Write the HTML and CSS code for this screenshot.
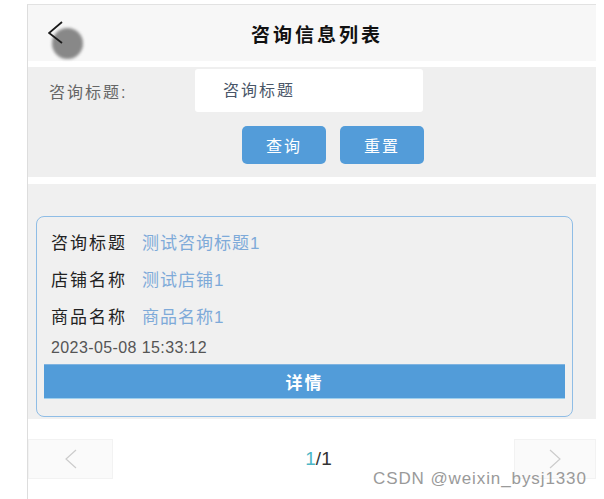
FILE: index.html
```html
<!DOCTYPE html>
<html lang="zh-CN">
<head>
  <meta charset="UTF-8">
  <title>咨询信息列表</title>
  <meta name="viewport" content="width=device-width, initial-scale=1">
  <link rel="stylesheet" href="styles.css">
</head>
<body>
  <div class="page">
    <div class="header">
      <span class="back">
        <span class="touch"></span>
        <svg width="16" height="24" viewBox="0 0 16 24"><polyline points="14,1 1,12 14,22" fill="none" stroke="#1a1a1a" stroke-width="1.8"/></svg>
      </span>
      <h1>咨询信息列表</h1>
    </div>

    <div class="search">
      <div class="search-row">
        <label>咨询标题:</label>
        <input type="text" placeholder="咨询标题">
      </div>
      <div class="search-btns">
        <button class="btn">查询</button>
        <button class="btn">重置</button>
      </div>
    </div>

    <div class="list">
      <div class="card">
        <div class="row"><span class="key">咨询标题</span><span class="val">测试咨询标题1</span></div>
        <div class="row"><span class="key">店铺名称</span><span class="val">测试店铺1</span></div>
        <div class="row"><span class="key">商品名称</span><span class="val">商品名称1</span></div>
        <div class="date">2023-05-08 15:33:12</div>
        <button class="detail">详情</button>
      </div>
    </div>

    <div class="pager">
      <span class="pg-btn"><svg width="12" height="20" viewBox="0 0 12 20"><polyline points="11,1 1,10 11,19" fill="none" stroke="#ccc" stroke-width="1.2"/></svg></span>
      <span class="pg-num"><em>1</em>/1</span>
      <span class="pg-btn next"><svg width="12" height="20" viewBox="0 0 12 20"><polyline points="1,1 11,10 1,19" fill="none" stroke="#ccc" stroke-width="1.2"/></svg></span>
    </div>
  </div>
  <div class="mark">CSDN @weixin_bysj1330</div>
</body>
</html>
```

FILE: styles.css
```css
body {
  margin: 0;
  background: #fff;
  font-family: "Liberation Sans", "Noto Sans CJK SC", sans-serif;
  color: #222;
}
.page {
  margin: 4px 0 0 27px;
  width: 569px;
  min-height: 495px;
  border-left: 1px solid #ddd;
  border-top: 1px solid #e2e2e2;
  box-sizing: border-box;
}
.header {
  position: relative;
  height: 56px;
  background: #f7f7f7;
  display: flex;
  align-items: center;
  justify-content: center;
}
.header h1 {
  margin: 0 0 0 10px;
  font-size: 19px;
  letter-spacing: 3px;
  font-weight: bold;
  color: #111;
}
.back {
  position: absolute;
  left: 20px;
  top: 16px;
}
.back svg {
  position: relative;
  display: block;
}
.touch {
  position: absolute;
  left: 4px;
  top: 7px;
  width: 31px;
  height: 31px;
  border-radius: 50%;
  background: #888;
  filter: blur(1.5px);
}
.search {
  margin-top: 6px;
  background: #efefef;
  height: 110px;
  padding-top: 2px;
  box-sizing: border-box;
}
.search-row {
  display: flex;
  align-items: center;
  padding-left: 21px;
}
.search-row label {
  width: 146px;
  font-size: 16px;
  letter-spacing: 2px;
  color: #666;
}
.search-row input {
  width: 228px;
  height: 43px;
  border: none;
  border-radius: 3px;
  background: #fff;
  padding: 0 0 0 28px;
  box-sizing: border-box;
  font-family: inherit;
  font-size: 16px;
  letter-spacing: 2px;
}
.search-row input::placeholder {
  color: #4a5668;
}
.search-btns {
  display: flex;
  gap: 14px;
  padding-left: 214px;
  margin-top: 14px;
}
.btn {
  width: 84px;
  height: 38px;
  border: none;
  border-radius: 5px;
  background: #539cd9;
  color: #fff;
  font-family: inherit;
  font-size: 16px;
  letter-spacing: 2px;
}
.list {
  margin-top: 7px;
  background: #f0f0f0;
  padding: 32px 23px 2px 8px;
}
.card {
  border: 1px solid #8fbde6;
  border-radius: 8px;
  padding: 8px 7px 17px 7px;
}
.row {
  display: flex;
  gap: 15px;
  height: 37px;
  line-height: 37px;
  padding-left: 7px;
  font-size: 17px;
}
.key {
  color: #222;
  letter-spacing: 2px;
}
.val {
  color: #7eaad9;
  letter-spacing: 1px;
}
.date {
  height: 24px;
  line-height: 24px;
  padding-left: 7px;
  font-size: 16px;
  letter-spacing: 0.4px;
  color: #555;
}
.detail {
  display: block;
  width: 100%;
  height: 35px;
  margin-top: 4px;
  border: none;
  border-top: 1px solid #7fb3e0;
  border-bottom: 1px solid #9fd0ee;
  background: #529cd9;
  color: #fff;
  font-family: inherit;
  font-size: 17px;
  font-weight: bold;
  letter-spacing: 2px;
}
.pager {
  display: flex;
  justify-content: space-between;
  align-items: center;
  margin-top: 20px;
}
.pg-btn {
  width: 85px;
  height: 40px;
  background: #fafafa;
  border: 1px solid #f2f2f2;
  box-sizing: border-box;
  display: flex;
  align-items: center;
  justify-content: center;
}
.pg-btn.next {
  width: 82px;
}
.pg-num {
  font-size: 19px;
  color: #333;
  padding-left: 10px;
}
.pg-num em {
  font-style: normal;
  color: #4cb6c6;
}
.mark {
  position: absolute;
  left: 373px;
  top: 469px;
  font-size: 17px;
  letter-spacing: 0.9px;
  color: #9a9a9a;
}
```
